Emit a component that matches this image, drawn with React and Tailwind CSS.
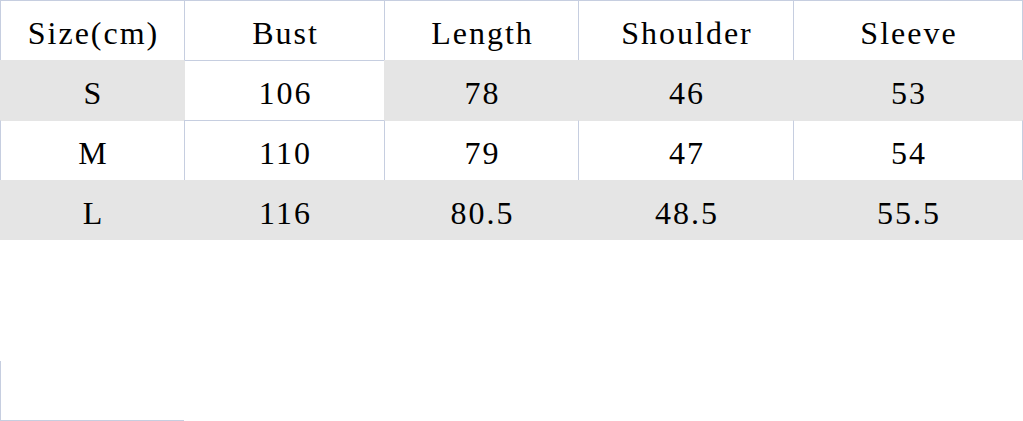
import React from "react";

const rows = [
  { cells: ["Size(cm)", "Bust", "Length", "Shoulder", "Sleeve"], gray: [0, 0, 0, 0, 0] },
  { cells: ["S", "106", "78", "46", "53"], gray: [1, 0, 1, 1, 1] },
  { cells: ["M", "110", "79", "47", "54"], gray: [0, 0, 0, 0, 0] },
  { cells: ["L", "116", "80.5", "48.5", "55.5"], gray: [1, 1, 1, 1, 1] },
];

export default function App() {
  return (
    <div className="w-[1023px] h-[421px] bg-white overflow-hidden" style={{ fontFamily: '"Liberation Serif", serif' }}>
      <div className="grid grid-cols-[184px_200px_194px_215px_230px]">
        {rows.map((row, r) =>
          row.cells.map((text, c) => {
            const self = row.gray[c] === 1;
            const above = r > 0 && rows[r - 1].gray[c] === 1;
            const left = c > 0 && row.gray[c - 1] === 1;
            const last = c === 4;
            const cls = [
              "h-[60px] flex items-center justify-center border-t border-l text-[32px] leading-none text-black pt-[4px]",
              self ? "bg-[#e5e5e5]" : "bg-white",
              self || above ? "border-t-[#e5e5e5]" : "border-t-[#c6cee0]",
              self || left ? "border-l-[#e5e5e5]" : "border-l-[#c6cee0]",
              last ? (self ? "border-r border-r-[#e5e5e5]" : "border-r border-r-[#c6cee0]") : "",
            ].join(" ");
            return (
              <div key={`${r}-${c}`} className={cls}>
                <span className="tracking-[2px] pl-[2px]">{text}</span>
              </div>
            );
          })
        )}
      </div>
      <div className="h-[121px]" />
      <div className="w-[184px] h-[60px] border-l border-b border-[#c6cee0]" />
    </div>
  );
}
